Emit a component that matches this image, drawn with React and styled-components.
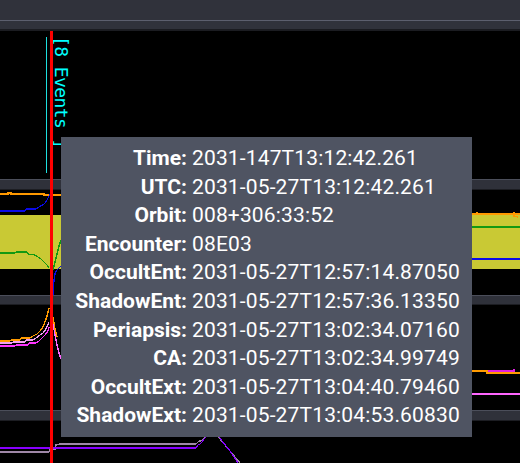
import React from "react";
import styled, { createGlobalStyle } from "styled-components";

const Global = createGlobalStyle`
  html, body { margin: 0; padding: 0; background: #000; }
  body { width: 520px; height: 463px; overflow: hidden; font-family: Roboto, "Liberation Sans", sans-serif; }
`;

const Page = styled.div`
  width: 520px;
  height: 463px;
  display: flex;
  flex-direction: column;
  background: #000;
  overflow: hidden;
`;

const Toolbar = styled.div`
  height: 31px;
  flex: none;
  display: flex;
  flex-direction: column;
  background: #30323b;
`;

const ToolbarTop = styled.div`
  height: 20px;
  border-bottom: 1px solid #5c5f6e;
`;

const ToolbarBottom = styled.div`
  flex: 1;
  border-bottom: 2px solid #1b1c21;
`;

const ChartArea = styled.div`
  position: relative;
  flex: 1;
  display: flex;
  flex-direction: column;
`;

const Track = styled.div`
  height: ${(p) => p.$h}px;
  flex: none;
  position: relative;
  background: #000;
`;

const Separator = styled.div`
  height: ${(p) => p.$h}px;
  flex: none;
  box-sizing: border-box;
  background: #2f313a;
  border-top: 1px solid #4b4e5a;
  border-bottom: 1px solid #1c1d22;
`;

const Plot = styled.svg`
  display: block;
  width: 520px;
  height: ${(p) => p.$h}px;
  shape-rendering: crispEdges;
`;

const Cursor = styled.div`
  position: absolute;
  left: 50px;
  top: 0;
  bottom: 0;
  width: 3px;
  background: #ff0000;
`;

const EventLine = styled.div`
  position: absolute;
  left: 46px;
  top: 6px;
  height: 136px;
  width: 1px;
  background: #1ee0e0;
`;

const EventLabel = styled.div`
  position: absolute;
  left: 51px;
  top: 5px;
  writing-mode: vertical-rl;
  font-family: "DejaVu Sans Mono", "Liberation Mono", monospace;
  font-size: 18px;
  font-weight: 400;
  letter-spacing: -0.6px;
  line-height: 21px;
  color: #00ffff;
  white-space: pre;
  -webkit-font-smoothing: none;
`;

const Tooltip = styled.div`
  position: absolute;
  left: 61px;
  top: 106px;
  width: 411px;
  height: 300px;
  box-sizing: border-box;
  padding: 7px 12px 7px 8px;
  background: #4f5462;
  display: grid;
  grid-template-columns: 118px 1fr;
  column-gap: 5px;
  align-content: start;
  font-family: Roboto, "Liberation Sans", sans-serif;
  font-size: 21px;
  line-height: 28.6px;
  color: #ffffff;
`;

const Label = styled.div`
  font-weight: 700;
  text-align: right;
  white-space: nowrap;
`;

const Value = styled.div`
  font-weight: 400;
  white-space: nowrap;
  letter-spacing: 0.15px;
`;

const rows = [
  ["Time:", "2031-147T13:12:42.261"],
  ["UTC:", "2031-05-27T13:12:42.261"],
  ["Orbit:", "008+306:33:52"],
  ["Encounter:", "08E03"],
  ["OccultEnt:", "2031-05-27T12:57:14.87050"],
  ["ShadowEnt:", "2031-05-27T12:57:36.13350"],
  ["Periapsis:", "2031-05-27T13:02:34.07160"],
  ["CA:", "2031-05-27T13:02:34.99749"],
  ["OccultExt:", "2031-05-27T13:04:40.79460"],
  ["ShadowExt:", "2031-05-27T13:04:53.60830"],
];

const pts = (a) => a.map((p) => p.join(",")).join(" ");

function Line({ points, color, w = 1.3 }) {
  return <polyline points={pts(points)} fill="none" stroke={color} strokeWidth={w} />;
}

function Track2() {
  return (
    <Plot $h={105} viewBox="0 0 520 105">
      <rect x="0" y="24.5" width="520" height="54" fill="#c9c934" />
      <Line color="#ff9900" points={[[0, 4], [8, 4], [8, 3], [11, 3], [11, 4], [44, 4], [44, 5], [61, 5]]} />
      <Line color="#ff9900" points={[[472, 24], [520, 24]]} />
      <Line color="#ff9900" points={[[477, 22], [477, 25]]} />
      <Line color="#ff9900" points={[[514, 22], [514, 26], [518, 27]]} />
      <Line color="#0a0ae6" points={[[0, 21], [25, 21], [26, 19], [35, 19], [38, 18], [40, 16], [43, 15], [45, 13], [47, 10], [49, 6], [51, 2]]} />
      <Line color="#0a0ae6" points={[[53, 105], [54, 90], [55, 84], [57, 80], [59, 78], [61, 76]]} />
      <Line color="#0a0ae6" points={[[472, 69], [520, 69]]} />
      <Line color="#129912" points={[[0, 63], [15, 63], [16, 62], [27, 62], [28, 64], [35, 65], [38, 67], [41, 69], [44, 72], [47, 75], [49, 78]]} />
      <Line color="#129912" points={[[53, 80], [55, 72], [57, 64], [59, 56], [61, 50]]} />
      <Line color="#129912" points={[[472, 37], [520, 37]]} />
    </Plot>
  );
}

function Track3() {
  return (
    <Plot $h={105} viewBox="0 0 520 105">
      <Line color="#ff9a00" points={[[0, 36], [10, 36], [11, 35], [20, 35], [21, 33], [30, 33], [33, 31], [37, 29], [40, 26], [43, 22], [45, 17], [47, 11], [49, 3]]} />
      <Line color="#f2a0f2" points={[[0, 38], [12, 38], [13, 37], [25, 37], [26, 35], [33, 35], [36, 33], [40, 30], [43, 28], [46, 24], [49, 17]]} />
      <Line color="#ff33ff" points={[[0, 41], [15, 41], [16, 40], [28, 40], [29, 38], [36, 38], [39, 36], [42, 33], [45, 30], [48, 26], [49, 22]]} />
      <Line color="#ff66ff" points={[[53, 18], [55, 30], [57, 40], [59, 48], [61, 54]]} />
      <Line color="#ff9a00" points={[[53, 12], [55, 24], [57, 32]]} />
      <Line color="#ff9a00" points={[[472, 66], [487, 66], [487, 68], [520, 68]]} />
      <Line color="#e020e0" points={[[488, 66], [514, 66]]} />
      <Line color="#e020e0" points={[[514, 64], [514, 67]]} />
      <Line color="#ff66ff" points={[[472, 89], [520, 89]]} />
    </Plot>
  );
}

function Track4() {
  return (
    <Plot $h={42} viewBox="0 0 520 42">
      <Line color="#a088a8" points={[[0, 31], [49, 31], [50, 28], [55, 28], [56, 24], [60, 23], [196, 23], [199, 20], [201, 20], [203, 18], [206, 16], [210, 12], [214, 12], [220, 18], [240, 42]]} />
      <Line color="#8800ff" points={[[0, 27], [196, 27], [198, 24], [200, 23], [202, 21], [204, 18], [207, 15], [212, 10], [218, 14], [222, 20], [230, 30], [238, 42]]} />
    </Plot>
  );
}

export default function App() {
  return (
    <>
      <Global />
      <Page>
        <Toolbar>
          <ToolbarTop />
          <ToolbarBottom />
        </Toolbar>
        <ChartArea>
          <Track $h={148} />
          <Separator $h={11} />
          <Track $h={105}>
            <Track2 />
          </Track>
          <Separator $h={10} />
          <Track $h={105}>
            <Track3 />
          </Track>
          <Separator $h={11} />
          <Track $h={42}>
            <Track4 />
          </Track>
          <EventLine />
          <EventLabel>[8 Events ]</EventLabel>
          <Cursor />
          <Tooltip>
            {rows.map(([l, v]) => (
              <React.Fragment key={l}>
                <Label>{l}</Label>
                <Value>{v}</Value>
              </React.Fragment>
            ))}
          </Tooltip>
        </ChartArea>
      </Page>
    </>
  );
}
